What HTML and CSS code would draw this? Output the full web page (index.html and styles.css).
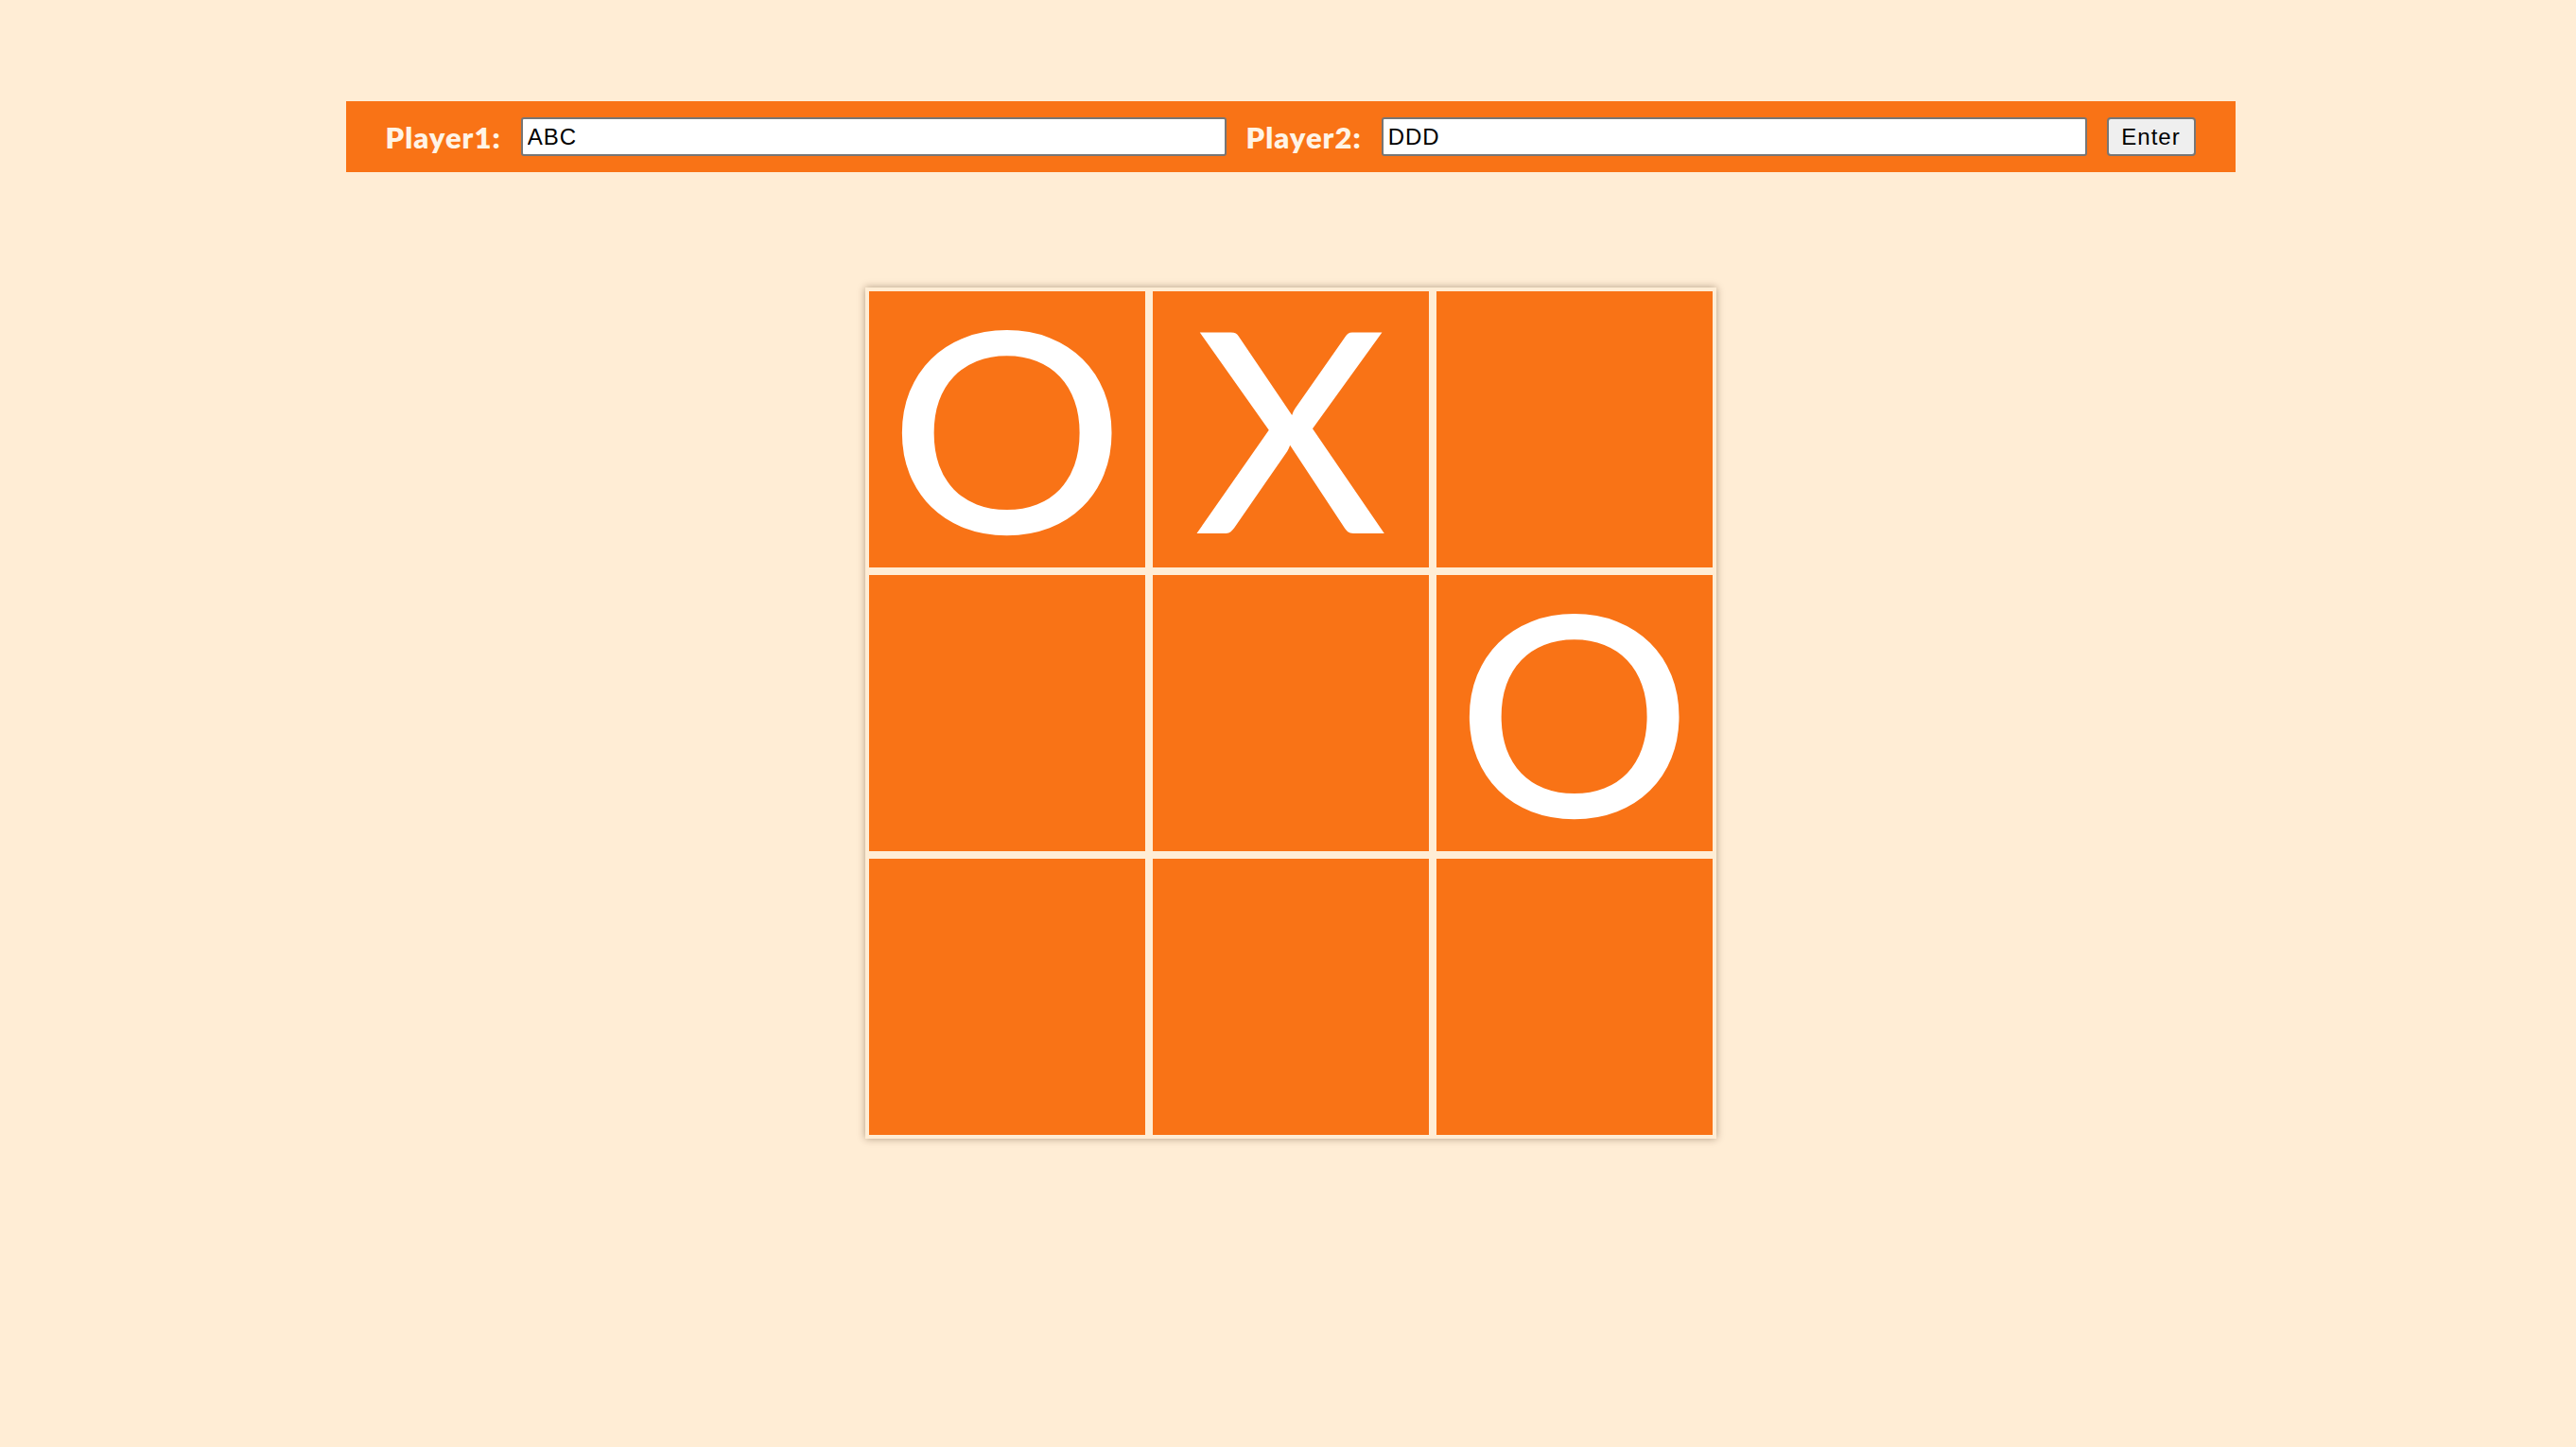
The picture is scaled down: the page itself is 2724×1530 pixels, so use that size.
FILE: index.html
```html
<!DOCTYPE html>
<html lang="en">
<head>
<meta charset="utf-8">
<title>Tic Tac Toe</title>
<link rel="stylesheet" href="styles.css">
</head>
<body>
<form class="players">
  <label class="player-label" for="p1">Player1:</label>
  <input class="player-input" id="p1" type="text" value="ABC">
  <label class="player-label" for="p2">Player2:</label>
  <input class="player-input" id="p2" type="text" value="DDD">
  <button class="enter-btn" type="button">Enter</button>
</form>
<div class="board">
  <div class="cell"><span class="mark mark-o">O</span></div>
  <div class="cell"><span class="mark mark-x">X</span></div>
  <div class="cell"></div>
  <div class="cell"></div>
  <div class="cell"></div>
  <div class="cell"><span class="mark mark-o">O</span></div>
  <div class="cell"></div>
  <div class="cell"></div>
  <div class="cell"></div>
</div>
</body>
</html>
```
FILE: styles.css
```css
html, body {
  margin: 0;
  padding: 0;
}
body {
  background: #ffedd5;
  min-height: 100vh;
  padding-left: 5px;
  box-sizing: border-box;
  font-family: "Lato", "Liberation Sans", sans-serif;
}
.players {
  width: 1998px;
  height: 75px;
  margin: 107px auto 0;
  background: #f97316;
  display: flex;
  align-items: center;
  gap: 21px;
  padding: 0 42px 0 42px;
  box-sizing: border-box;
}
.player-label {
  color: #fff4e6;
  font-family: "Lato", "Liberation Sans", sans-serif;
  font-weight: 800;
  font-size: 31px;
  letter-spacing: 1px;
}
.player-input {
  flex: 1;
  height: 41px;
  box-sizing: border-box;
  font-family: "Liberation Sans", Arial, sans-serif;
  font-size: 24px;
  letter-spacing: 1px;
  padding: 1px 5px;
  border: 2px solid #767676;
  border-radius: 3px;
  background: #fff;
  color: #000;
}
.enter-btn {
  width: 94px;
  height: 41px;
  box-sizing: border-box;
  font-family: "Liberation Sans", Arial, sans-serif;
  font-size: 24px;
  letter-spacing: 1px;
  background: #efefef;
  color: #000;
  border: 2px solid #767676;
  border-radius: 4px;
  padding: 0;
}
.board {
  width: 900px;
  height: 900px;
  box-sizing: border-box;
  margin: 122px auto 0;
  padding: 4px;
  background: #ffedd5;
  display: grid;
  grid-template-columns: repeat(3, 1fr);
  grid-template-rows: repeat(3, 1fr);
  gap: 8px;
  box-shadow: 0 0 8px rgba(60, 35, 10, 0.4);
}
.cell {
  background: #f97316;
  display: flex;
  align-items: center;
  justify-content: center;
}
.mark {
  color: #ffffff;
  font-family: "Lato", "Liberation Sans", sans-serif;
  font-weight: 500;
  font-size: 296px;
  line-height: 0.9;
  transform: translateY(-4px) scaleX(1.05);
}
```
